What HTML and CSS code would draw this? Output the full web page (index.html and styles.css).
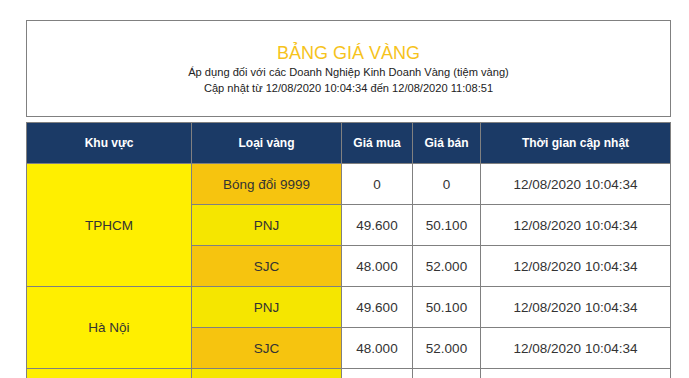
FILE: index.html
```html
<!DOCTYPE html>
<html lang="vi">
<head>
<meta charset="utf-8">
<link rel="stylesheet" href="styles.css">
</head>
<body>
<div class="page">
  <div class="banner">
    <h1 class="title">BẢNG GIÁ VÀNG</h1>
    <p class="sub">Áp dụng đối với các Doanh Nghiệp Kinh Doanh Vàng (tiệm vàng)</p>
    <p class="sub">Cập nhật từ 12/08/2020 10:04:34 đến 12/08/2020 11:08:51</p>
  </div>
  <table class="prices">
    <colgroup>
      <col class="c1"><col class="c2"><col class="c3"><col class="c4"><col class="c5">
    </colgroup>
    <thead>
      <tr><th>Khu vực</th><th>Loại vàng</th><th>Giá mua</th><th>Giá bán</th><th>Thời gian cập nhật</th></tr>
    </thead>
    <tbody>
      <tr><td class="area" rowspan="3">TPHCM</td><td class="kind dark">Bóng đổi 9999</td><td>0</td><td>0</td><td>12/08/2020 10:04:34</td></tr>
      <tr><td class="kind light">PNJ</td><td>49.600</td><td>50.100</td><td>12/08/2020 10:04:34</td></tr>
      <tr><td class="kind dark">SJC</td><td>48.000</td><td>52.000</td><td>12/08/2020 10:04:34</td></tr>
      <tr><td class="area" rowspan="2">Hà Nội</td><td class="kind light">PNJ</td><td>49.600</td><td>50.100</td><td>12/08/2020 10:04:34</td></tr>
      <tr><td class="kind dark">SJC</td><td>48.000</td><td>52.000</td><td>12/08/2020 10:04:34</td></tr>
      <tr><td class="area" rowspan="2">Đà Nẵng</td><td class="kind light">PNJ</td><td>49.600</td><td>50.100</td><td>12/08/2020 10:04:34</td></tr>
      <tr><td class="kind dark">SJC</td><td>48.000</td><td>52.000</td><td>12/08/2020 10:04:34</td></tr>
    </tbody>
  </table>
</div>
</body>
</html>
```
FILE: styles.css
```css
html, body {
  margin: 0;
  padding: 0;
  background: #fff;
  font-family: "Liberation Sans", Arial, sans-serif;
  color: #333;
}
.page {
  padding: 20px 0 0 26px;
  width: 645px;
}
.banner {
  box-sizing: border-box;
  height: 97px;
  border: 1px solid #808080;
  margin-bottom: 5px;
  text-align: center;
  padding-top: 22px;
}
.title {
  margin: 0 0 1px;
  font-size: 18px;
  font-weight: normal;
  line-height: 20px;
  color: #f6c31c;
}
.sub {
  margin: 0;
  font-size: 11.1px;
  line-height: 16px;
  color: #222;
}
.prices {
  width: 644px;
  border-collapse: collapse;
  table-layout: fixed;
}
.c1 { width: 165px; }
.c2 { width: 150px; }
.c3 { width: 71px; }
.c4 { width: 68px; }
.c5 { width: 190px; }
.prices th, .prices td {
  border: 1px solid #808080;
  height: 41px;
  padding: 0;
  text-align: center;
  vertical-align: middle;
  box-sizing: border-box;
}
.prices th {
  background: #1b3a66;
  color: #fff;
  font-size: 12px;
  font-weight: bold;
}
.prices td {
  font-size: 13.5px;
  color: #333;
  background: #fff;
}
.prices td.area { background: #ffef00; }
.prices td.kind.dark { background: #f6c40f; }
.prices td.kind.light { background: #f5e600; }
```
